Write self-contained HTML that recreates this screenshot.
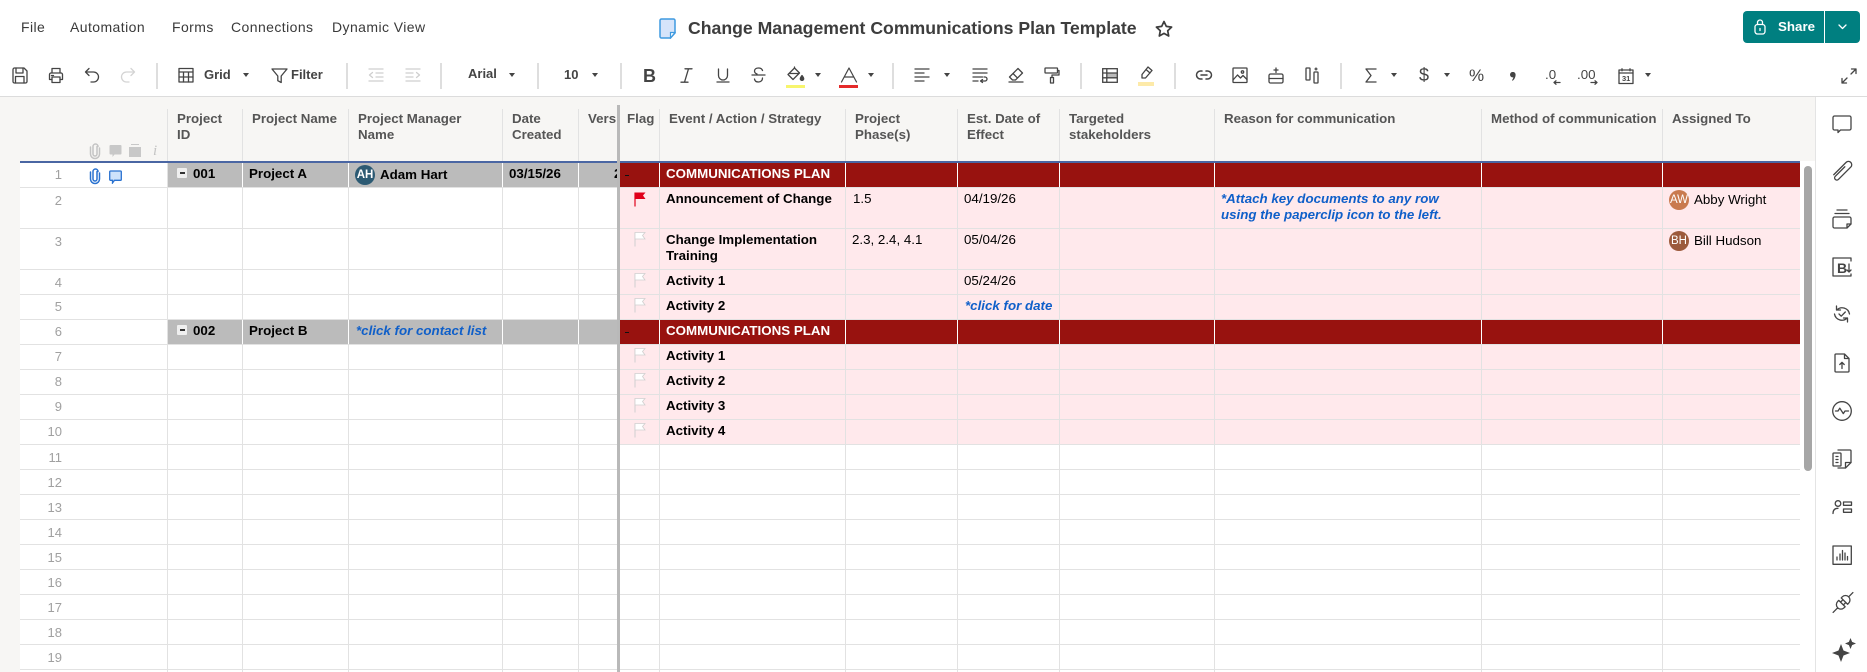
<!DOCTYPE html>
<html><head><meta charset="utf-8"><title>Change Management Communications Plan Template</title>
<style>
html,body{margin:0;padding:0;background:#fff}
body{position:relative;width:1867px;height:672px;overflow:hidden;font-family:"Liberation Sans",Arial,sans-serif;color:#000}
div,span,svg{position:absolute}
.t{white-space:nowrap;font-size:13.33px;line-height:16px;padding-top:1px}
.b{font-weight:bold}
.m{font-size:14px;color:#3a3a3a;letter-spacing:.42px;top:19px;line-height:16px;white-space:nowrap}
.h{font-size:13.3px;font-weight:bold;color:#555;line-height:16px;top:111px;white-space:nowrap}
.n{font-size:13px;color:#a0a0a0;line-height:16px;width:30px;left:32px;text-align:right}
.l{font-style:italic;font-weight:bold;color:#0f5fc9}
.tb{font-size:13px;font-weight:bold;color:#444;line-height:16px;top:67px;white-space:nowrap}
.sep{width:2px;height:26px;top:63px;background:#dedede}
.c{width:0;height:0;border-left:3.5px solid transparent;border-right:3.5px solid transparent;border-top:4.5px solid #444;top:73px}
.i{fill:none;stroke:#444;stroke-width:1.3;stroke-linecap:round;stroke-linejoin:round;overflow:visible}
.hl{left:20px;width:1780px;height:1px;background:#e2e2e2}
.vl{width:1px;background:#e2e2e2}
.av{border-radius:50%;width:20px;height:20px;color:#fff;font-size:11.5px;line-height:20px;text-align:center}
.mb{width:10px;height:10px;left:177px;background:#efefef;border-radius:1px}
.mb:after{content:"";position:absolute;left:2.5px;top:4px;width:5px;height:2px;background:#333}
.fl{width:12px;height:15px;left:634px;overflow:visible}
</style></head>
<body>
<!-- top bar -->
<div class="m" style="left:21px">File</div>
<div class="m" style="left:70px">Automation</div>
<div class="m" style="left:172px">Forms</div>
<div class="m" style="left:231px">Connections</div>
<div class="m" style="left:332px">Dynamic View</div>

<svg style="left:659px;top:18px" width="17" height="21" viewBox="0 0 17 21"><path d="M2.5 1h12a1.5 1.5 0 0 1 1.5 1.500V15l-4.500 5H2.500A1.500 1.500 0 0 1 1 18.500v-16A1.500 1.500 0 0 1 2.500 1z" fill="#d6e4fa" stroke="#3f9ae0" stroke-width="1.500"/><path d="M16 14.500h-4.500V20z" fill="#fff" stroke="#3f9ae0" stroke-width="1.200"/></svg>
<div class="t b" style="left:688px;top:16px;font-size:17.65px;line-height:22px;color:#3d3d3d">Change Management Communications Plan Template</div>
<svg class="i" style="left:1155px;top:20px;stroke-width:1.700;stroke:#3d3d3d" width="18" height="18" viewBox="0 0 18 18"><path d="M9 1.500l2.300 4.900 5.300.7-3.900 3.600 1 5.300L9 13.400l-4.700 2.600 1-5.300L1.400 7.100l5.300-.7z"/></svg>

<div style="left:1743px;top:11px;width:117px;height:32px;background:#007f80;border-radius:4px"></div>
<div style="left:1824px;top:11px;width:1px;height:32px;background:#fff"></div>
<svg class="i" style="left:1754px;top:19px;stroke:#fff;stroke-width:1.300" width="12" height="16" viewBox="0 0 12 16"><rect x="1" y="5.500" width="10" height="9.500" rx="2.500"/><path d="M3.500 5.500V3.500a2.500 2.500 0 0 1 5 0v2"/><path d="M6 9.500v2"/></svg>
<div class="t b" style="left:1778px;top:18px;color:#fff">Share</div>
<svg class="i" style="left:1838px;top:24px;stroke:#fff;stroke-width:1.300" width="9" height="6" viewBox="0 0 9 6"><path d="M1 1l3.500 3.500L8 1"/></svg>

<!-- toolbar -->
<svg class="i" style="left:12px;top:67px" width="16" height="17" viewBox="0 0 16 17"><path d="M1 2.500A1.500 1.500 0 0 1 2.500 1H12l3 3v10.500a1.500 1.500 0 0 1-1.500 1.500h-11A1.500 1.500 0 0 1 1 14.500z"/><path d="M4 1v5h7V1M3.500 16v-6.500h8.500V16"/></svg>
<svg class="i" style="left:48px;top:67px" width="16" height="17" viewBox="0 0 16 17"><path d="M4 6V1.500h8V6M4 12.500H1.500V7.500A1.500 1.500 0 0 1 3 6h10a1.500 1.500 0 0 1 1.500 1.500v5H12"/><rect x="4" y="10" width="8" height="5.500"/><path d="M3.500 8.500h2"/></svg>
<svg class="i" style="left:84px;top:67px" width="16" height="17" viewBox="0 0 16 17"><path d="M5 1.500L1.500 5 5 8.500M1.500 5h8a5 5 0 0 1 0 10H7"/></svg>
<svg class="i" style="left:120px;top:67px;stroke:#d4d4d4" width="16" height="17" viewBox="0 0 16 17"><path d="M11 1.500L14.500 5 11 8.500M14.500 5h-8a5 5 0 0 0 0 10H9"/></svg>
<div class="sep" style="left:156px"></div>

<svg class="i" style="left:178px;top:67px" width="16" height="16" viewBox="0 0 16 16"><rect x="1" y="1.500" width="14" height="13.500"/><path d="M1 5h14M1 10h14M5.500 5v10M10.500 5v10"/></svg>
<div class="tb" style="left:204px">Grid</div>
<div class="c" style="left:243px"></div>
<svg class="i" style="left:271px;top:68px" width="17" height="16" viewBox="0 0 17 16"><path d="M1 1h15l-5.800 7v6.500l-3.400-1.800V8z"/></svg>
<div class="tb" style="left:291px">Filter</div>
<div class="sep" style="left:346px"></div>
<svg class="i" style="left:368px;top:68px;stroke:#cfcfcf" width="16" height="14" viewBox="0 0 16 14"><path d="M1 1h14M8 5h7M8 9h7M1 13h14M4.500 4.500L1.500 7l3 2.500"/></svg>
<svg class="i" style="left:405px;top:68px;stroke:#cfcfcf" width="16" height="14" viewBox="0 0 16 14"><path d="M1 1h14M1 5h7M1 9h7M1 13h14M11.500 4.500l3 2.500-3 2.500"/></svg>
<div class="sep" style="left:440px"></div>
<div class="tb" style="left:468px;top:66px">Arial</div>
<div class="c" style="left:509px"></div>
<div class="sep" style="left:537px"></div>
<div class="tb" style="left:564px">10</div>
<div class="c" style="left:592px"></div>
<div class="sep" style="left:620px"></div>

<div class="t b" style="left:643px;top:65px;font-size:18px;line-height:20px;color:#444">B</div>
<svg class="i" style="left:680px;top:68px;stroke-width:1.300" width="13" height="15" viewBox="0 0 13 15"><path d="M5 .8h7M1 14.200h7M8.500 .8L4.500 14.200"/></svg>
<svg class="i" style="left:716px;top:68px" width="14" height="15" viewBox="0 0 14 15"><path d="M2.500 1v6.500a4.500 4.500 0 0 0 9 0V1M1 14h12"/></svg>
<svg class="i" style="left:751px;top:67px" width="15" height="16" viewBox="0 0 15 16"><path d="M11.500 3.500C11 2 9.500 1 7.500 1 5 1 3.500 2.300 3.500 4c0 1.500 1 2.500 2.500 3M1 8h13M11.500 11c0 2.500-1.800 4-4 4-2 0-3.700-1-4-3"/></svg>
<svg class="i" style="left:787px;top:67px" width="18" height="14" viewBox="0 0 18 14"><path d="M7.500 1L1 7.500l5 5 6.500-6.500zM7.500 1V0M2.500 6.500h9"/><path d="M15 8.500c-1 1.500-1.700 2.300-1.700 3.200a1.700 1.700 0 0 0 3.400 0c0-.9-.7-1.700-1.700-3.200z" fill="#444"/></svg>
<div style="left:786px;top:85px;width:19px;height:3px;background:#f7f56d"></div>
<div class="c" style="left:815px"></div>
<svg class="i" style="left:840px;top:67px;stroke-width:1.200" width="18" height="16" viewBox="0 0 18 16"><path d="M1.500 15L9 1l7.500 14M4.300 10h9.400"/></svg>
<div style="left:839px;top:85px;width:19px;height:3px;background:#e52b2b"></div>
<div class="c" style="left:868px"></div>
<div class="sep" style="left:892px"></div>

<svg class="i" style="left:914px;top:68px" width="16" height="14" viewBox="0 0 16 14"><path d="M1 1h14M1 5h9M1 9h14M1 13h9"/></svg>
<div class="c" style="left:944px"></div>
<svg class="i" style="left:972px;top:68px" width="16" height="15" viewBox="0 0 16 15"><path d="M1 1h14M1 5h14M1 9h9.500M1 13h5M8.500 13h4.500a2 2 0 0 0 0-4h-1M10.500 11.500L8.500 13l2 1.500"/></svg>
<svg class="i" style="left:1008px;top:67px" width="16" height="16" viewBox="0 0 16 16"><path d="M10 1.500l4.500 4.500-7 7H4.500L1.500 10zM5 6.500l4.500 4.500M1 15h14"/></svg>
<svg class="i" style="left:1044px;top:67px" width="16" height="17" viewBox="0 0 16 17"><rect x="1" y="1" width="12.500" height="5" rx=".5"/><path d="M13.500 3.500H15v4.500H8v2.500"/><rect x="6.500" y="10.500" width="3" height="5.500"/></svg>
<div class="sep" style="left:1080px"></div>
<svg style="left:1102px;top:68px" width="16" height="15" viewBox="0 0 16 15"><rect x="4.800" y="5" width="10.500" height="4.800" fill="#bbb"/><rect x=".7" y=".7" width="14.600" height="13.600" fill="none" stroke="#444" stroke-width="1.300"/><path d="M.7 5h14.600M.7 9.800h14.600M4.800.7v13.600" fill="none" stroke="#444" stroke-width="1.300"/></svg>
<svg class="i" style="left:1139px;top:66px" width="14" height="15" viewBox="0 0 14 15"><path d="M9 1l4 3.500-6.500 7.500H3V8.500zM7 3.500l4 3.500"/></svg>
<div style="left:1138px;top:82px;width:16px;height:4px;background:#fdeaa9"></div>
<div class="sep" style="left:1174px"></div>
<svg class="i" style="left:1196px;top:69px;stroke-width:1.500" width="16" height="12" viewBox="0 0 16 12"><path d="M6 2H4.500a4 4 0 0 0 0 8H6M10 2h1.500a4 4 0 0 1 0 8H10M5 6h6"/></svg>
<svg class="i" style="left:1232px;top:67px" width="16" height="16" viewBox="0 0 16 16"><rect x="1" y="1" width="14" height="14.500" rx=".5"/><path d="M1 13l4.500-5 3 3 2.500-2.500 4 4"/><circle cx="10.500" cy="5" r="1.200"/></svg>
<svg class="i" style="left:1268px;top:67px" width="16" height="17" viewBox="0 0 16 17"><rect x="1" y="7" width="14" height="9" rx="1.500"/><path d="M1 11.500h14M8 1v4.500M6 3h4"/></svg>
<svg class="i" style="left:1305px;top:67px" width="14" height="17" viewBox="0 0 14 17"><rect x="1" y="1" width="4" height="12" rx=".5"/><rect x="9" y="5" width="4" height="11" rx=".5"/><path d="M11 1v2M10 2h2"/></svg>
<div class="sep" style="left:1340px"></div>
<svg class="i" style="left:1365px;top:68px" width="12" height="15" viewBox="0 0 12 15"><path d="M11 1H1l5 6.500L1 14h10"/></svg>
<div class="c" style="left:1391px"></div>
<div class="t" style="left:1419px;top:64px;font-size:18px;line-height:20px;color:#444">$</div>
<div class="c" style="left:1444px"></div>
<div class="t" style="left:1469px;top:65px;font-size:17px;line-height:20px;color:#444">%</div>
<svg style="left:1510px;top:72px" width="6" height="9" viewBox="0 0 6 9"><path d="M0 2.600a2.800 2.800 0 1 1 5.600.2c0 2.500-1.300 4.700-2.900 6l-.7-.6c.8-1 1.200-1.900 1.300-2.900A2.700 2.700 0 0 1 0 2.600z" fill="#444"/></svg>
<div class="t" style="left:1545px;top:66px;font-size:13.33px;color:#444">.0</div>
<svg class="i" style="left:1553px;top:80px" width="8" height="5" viewBox="0 0 8 5"><path d="M7 2.500H1M3 .8L1 2.500 3 4.200"/></svg>
<div class="t" style="left:1577px;top:66px;font-size:13.33px;color:#444">.00</div>
<svg class="i" style="left:1590px;top:80px" width="8" height="5" viewBox="0 0 8 5"><path d="M1 2.500h6M5 .8l2 1.700-2 1.700"/></svg>
<svg class="i" style="left:1618px;top:68px" width="16" height="16" viewBox="0 0 16 16"><rect x="1" y="2" width="14" height="13.500"/><path d="M1 5h14M4 .8v2M12 .8v2"/></svg>
<div class="t b" style="left:1622px;top:73px;font-size:7.500px;line-height:9px;color:#444">31</div>
<div class="c" style="left:1645px"></div>
<svg class="i" style="left:1841px;top:68px" width="16" height="16" viewBox="0 0 16 16"><path d="M10 6l5-5M10.500 1H15v4.500M6 10l-5 5M1 10.500V15h4.500"/></svg>

<div style="left:0;top:96px;width:1867px;height:1px;background:#dcdcdc"></div>

<!-- table base -->
<div style="left:0;top:97px;width:20px;height:575px;background:#f7f6f4"></div>
<div style="left:20px;top:97px;width:1795px;height:64px;background:#f7f6f4"></div>
<div style="left:1815px;top:97px;width:1px;height:575px;background:#e4e4e4"></div>

<!-- coloured rows -->
<div style="left:619px;top:188px;width:1181px;height:132px;background:#ffe9ec"></div>
<div style="left:619px;top:345px;width:1181px;height:100px;background:#ffe9ec"></div>

<!-- horizontal lines -->
<div class="hl" style="top:187px"></div><div class="hl" style="top:228px"></div><div class="hl" style="top:269px"></div><div class="hl" style="top:294px"></div><div class="hl" style="top:319px"></div><div class="hl" style="top:344px"></div><div class="hl" style="top:369px"></div><div class="hl" style="top:394px"></div><div class="hl" style="top:419px"></div><div class="hl" style="top:444px"></div><div class="hl" style="top:469px"></div><div class="hl" style="top:494px"></div><div class="hl" style="top:519px"></div><div class="hl" style="top:544px"></div><div class="hl" style="top:569px"></div><div class="hl" style="top:594px"></div><div class="hl" style="top:619px"></div><div class="hl" style="top:644px"></div><div class="hl" style="top:669px"></div>

<!-- vertical lines -->
<div class="vl" style="left:167px;top:109px;height:563px"></div>
<div class="vl" style="left:242px;top:109px;height:563px"></div>
<div class="vl" style="left:348px;top:109px;height:563px"></div>
<div class="vl" style="left:502px;top:109px;height:563px"></div>
<div class="vl" style="left:578px;top:109px;height:563px"></div>
<div class="vl" style="left:659px;top:109px;height:563px"></div>
<div class="vl" style="left:845px;top:109px;height:563px"></div>
<div class="vl" style="left:957px;top:109px;height:563px"></div>
<div class="vl" style="left:1059px;top:109px;height:563px"></div>
<div class="vl" style="left:1214px;top:109px;height:563px"></div>
<div class="vl" style="left:1481px;top:109px;height:563px"></div>
<div class="vl" style="left:1662px;top:109px;height:563px"></div>

<!-- section rows -->
<div style="left:168px;top:163px;width:449px;height:24px;background:#bbb"></div>
<div style="left:168px;top:320px;width:449px;height:24px;background:#bbb"></div>
<div style="left:619px;top:163px;width:1181px;height:24px;background:#98120f"></div>
<div style="left:619px;top:320px;width:1181px;height:24px;background:#98120f"></div>
<div class="vl" style="left:242px;top:163px;height:24px;background:#fff"></div><div class="vl" style="left:348px;top:163px;height:24px;background:#fff"></div><div class="vl" style="left:502px;top:163px;height:24px;background:#fff"></div><div class="vl" style="left:578px;top:163px;height:24px;background:#fff"></div>
<div class="vl" style="left:242px;top:320px;height:24px;background:#fff"></div><div class="vl" style="left:348px;top:320px;height:24px;background:#fff"></div><div class="vl" style="left:502px;top:320px;height:24px;background:#fff"></div><div class="vl" style="left:578px;top:320px;height:24px;background:#fff"></div>
<div class="vl" style="left:659px;top:163px;height:24px;background:#fff"></div><div class="vl" style="left:845px;top:163px;height:24px;background:#fff"></div><div class="vl" style="left:957px;top:163px;height:24px;background:#fff"></div><div class="vl" style="left:1059px;top:163px;height:24px;background:#fff"></div><div class="vl" style="left:1214px;top:163px;height:24px;background:#fff"></div><div class="vl" style="left:1481px;top:163px;height:24px;background:#fff"></div><div class="vl" style="left:1662px;top:163px;height:24px;background:#fff"></div>
<div class="vl" style="left:659px;top:320px;height:24px;background:#fff"></div><div class="vl" style="left:845px;top:320px;height:24px;background:#fff"></div><div class="vl" style="left:957px;top:320px;height:24px;background:#fff"></div><div class="vl" style="left:1059px;top:320px;height:24px;background:#fff"></div><div class="vl" style="left:1214px;top:320px;height:24px;background:#fff"></div><div class="vl" style="left:1481px;top:320px;height:24px;background:#fff"></div><div class="vl" style="left:1662px;top:320px;height:24px;background:#fff"></div>

<div style="left:20px;top:161px;width:1780px;height:2px;background:#4a66a3"></div>

<!-- header text -->
<div class="h" style="left:177px">Project<br>ID</div>
<div class="h" style="left:252px">Project Name</div>
<div class="h" style="left:358px">Project Manager<br>Name</div>
<div class="h" style="left:512px">Date<br>Created</div>
<div class="h" style="left:588px;width:28.5px;overflow:hidden">Version</div>
<div class="h" style="left:627px">Flag</div>
<div class="h" style="left:669px">Event / Action / Strategy</div>
<div class="h" style="left:855px">Project<br>Phase(s)</div>
<div class="h" style="left:967px">Est. Date of<br>Effect</div>
<div class="h" style="left:1069px">Targeted<br>stakeholders</div>
<div class="h" style="left:1224px">Reason for communication</div>
<div class="h" style="left:1491px">Method of communication</div>
<div class="h" style="left:1672px">Assigned To</div>

<!-- gutter header icons -->
<svg class="i" style="left:89px;top:143px;stroke:#c4c4c4;stroke-width:1.500" width="12" height="15" viewBox="0 0 12 15"><path d="M8 3.500v7.500a2 2 0 0 1-4 0V3.500a2.500 2.500 0 0 1 5 0"/><path d="M10.500 5v6a4.500 4.500 0 0 1-9 0V4"/></svg>
<svg style="left:109px;top:144px" width="13" height="14" viewBox="0 0 13 14"><path d="M1.500 1h10a1 1 0 0 1 1 1v7.500a1 1 0 0 1-1 1H5.500L3.500 13v-2.500h-2a1 1 0 0 1-1-1V2a1 1 0 0 1 1-1z" fill="#c8c8c8"/></svg>
<svg style="left:129px;top:144px" width="12" height="13" viewBox="0 0 12 13"><path d="M2 0h8v1H2zM0 3h12v10H0z" fill="#c8c8c8"/></svg>
<div class="t" style="left:153px;top:142px;font-family:'Liberation Serif',serif;font-style:italic;font-size:15px;color:#c4c4c4">i</div>

<!-- row numbers -->
<div class="n" style="top:167px">1</div><div class="n" style="top:193px">2</div><div class="n" style="top:234px">3</div><div class="n" style="top:275px">4</div><div class="n" style="top:299px">5</div><div class="n" style="top:324px">6</div><div class="n" style="top:349px">7</div><div class="n" style="top:374px">8</div><div class="n" style="top:399px">9</div><div class="n" style="top:424px">10</div><div class="n" style="top:450px">11</div><div class="n" style="top:475px">12</div><div class="n" style="top:500px">13</div><div class="n" style="top:525px">14</div><div class="n" style="top:550px">15</div><div class="n" style="top:575px">16</div><div class="n" style="top:600px">17</div><div class="n" style="top:625px">18</div><div class="n" style="top:650px">19</div>

<!-- row 1 icons -->
<svg class="i" style="left:89px;top:168px;stroke:#2a72d0;stroke-width:1.500" width="12" height="15" viewBox="0 0 12 15"><path d="M8 3.500v7.500a2 2 0 0 1-4 0V3.500a2.500 2.500 0 0 1 5 0"/><path d="M10.500 5v6a4.500 4.500 0 0 1-9 0V4"/></svg>
<svg style="left:109px;top:170px" width="13" height="14" viewBox="0 0 13 14"><path d="M1.500 1h10a.8.800 0 0 1 .8.800v7.700a.8.800 0 0 1-.8.800H5.500L3.500 13v-2.700h-2a.8.800 0 0 1-.8-.8V1.800A.8.800 0 0 1 1.500 1z" fill="#cfe2fb" stroke="#2a72d0" stroke-width="1.300"/></svg>

<!-- grid content left -->
<div class="mb" style="top:168px"></div>
<div class="t b" style="left:193px;top:165px">001</div>
<div class="t b" style="left:249px;top:165px">Project A</div>
<div class="av b" style="left:355px;top:165px;background:#2c5a73">AH</div>
<div class="t b" style="left:380px;top:166px">Adam Hart</div>
<div class="t b" style="left:509px;top:165px">03/15/26</div>
<div class="t b" style="left:614px;top:165px;width:3px;overflow:hidden">2</div>

<div class="mb" style="top:325px"></div>
<div class="t b" style="left:193px;top:322px">002</div>
<div class="t b" style="left:249px;top:322px">Project B</div>
<div class="t l" style="left:356px;top:322px">*click for contact list</div>

<div style="left:617px;top:105px;width:2.500px;height:567px;background:#b9b9b9"></div>

<!-- grid content right -->
<div style="left:625px;top:175px;width:4px;height:1px;background:#111"></div>
<div class="t b" style="left:666px;top:165px;color:#fff">COMMUNICATIONS PLAN</div>
<div style="left:625px;top:332px;width:4px;height:1px;background:#111"></div>
<div class="t b" style="left:666px;top:322px;color:#fff">COMMUNICATIONS PLAN</div>

<svg class="fl" style="top:192px" viewBox="0 0 12 15"><path d="M1 .5v14" stroke="#e0001b" stroke-width="1.200"/><path d="M1 .5h10.500L9 3.500l2.500 3.500H1z" fill="#e0001b"/></svg>
<svg class="fl" style="top:232px" viewBox="0 0 12 15"><path d="M1 .5v14" stroke="#cfcfcf" stroke-width="1"/><path d="M1 .5h10L8.500 3.500 11 7H1z" fill="#fff" stroke="#cfcfcf" stroke-width=".8"/></svg>
<svg class="fl" style="top:273px" viewBox="0 0 12 15"><path d="M1 .5v14" stroke="#cfcfcf" stroke-width="1"/><path d="M1 .5h10L8.500 3.500 11 7H1z" fill="#fff" stroke="#cfcfcf" stroke-width=".8"/></svg>
<svg class="fl" style="top:298px" viewBox="0 0 12 15"><path d="M1 .5v14" stroke="#cfcfcf" stroke-width="1"/><path d="M1 .5h10L8.500 3.500 11 7H1z" fill="#fff" stroke="#cfcfcf" stroke-width=".8"/></svg>
<svg class="fl" style="top:348px" viewBox="0 0 12 15"><path d="M1 .5v14" stroke="#cfcfcf" stroke-width="1"/><path d="M1 .5h10L8.500 3.500 11 7H1z" fill="#fff" stroke="#cfcfcf" stroke-width=".8"/></svg>
<svg class="fl" style="top:373px" viewBox="0 0 12 15"><path d="M1 .5v14" stroke="#cfcfcf" stroke-width="1"/><path d="M1 .5h10L8.500 3.500 11 7H1z" fill="#fff" stroke="#cfcfcf" stroke-width=".8"/></svg>
<svg class="fl" style="top:398px" viewBox="0 0 12 15"><path d="M1 .5v14" stroke="#cfcfcf" stroke-width="1"/><path d="M1 .5h10L8.500 3.500 11 7H1z" fill="#fff" stroke="#cfcfcf" stroke-width=".8"/></svg>
<svg class="fl" style="top:423px" viewBox="0 0 12 15"><path d="M1 .5v14" stroke="#cfcfcf" stroke-width="1"/><path d="M1 .5h10L8.500 3.500 11 7H1z" fill="#fff" stroke="#cfcfcf" stroke-width=".8"/></svg>

<div class="t b" style="left:666px;top:190px">Announcement of Change</div>
<div class="t" style="left:853px;top:190px">1.5</div>
<div class="t" style="left:964px;top:190px">04/19/26</div>
<div class="t l" style="left:1221px;top:190px">*Attach key documents to any row<br>using the paperclip icon to the left.</div>
<div class="av" style="left:1669px;top:190px;background:#c97a4f">AW</div>
<div class="t" style="left:1694px;top:191px">Abby Wright</div>

<div class="t b" style="left:666px;top:231px">Change Implementation<br>Training</div>
<div class="t" style="left:852px;top:231px">2.3, 2.4, 4.1</div>
<div class="t" style="left:964px;top:231px">05/04/26</div>
<div class="av" style="left:1669px;top:231px;background:#9c5a3c">BH</div>
<div class="t" style="left:1694px;top:232px">Bill Hudson</div>

<div class="t b" style="left:666px;top:272px">Activity 1</div>
<div class="t" style="left:964px;top:272px">05/24/26</div>
<div class="t b" style="left:666px;top:297px">Activity 2</div>
<div class="t l" style="left:965px;top:297px">*click for date</div>
<div class="t b" style="left:666px;top:347px">Activity 1</div>
<div class="t b" style="left:666px;top:372px">Activity 2</div>
<div class="t b" style="left:666px;top:397px">Activity 3</div>
<div class="t b" style="left:666px;top:422px">Activity 4</div>

<!-- right white gutter + scrollbar -->
<div style="left:1800px;top:163px;width:15px;height:509px;background:#fff"></div>
<div style="left:1804px;top:166px;width:8px;height:305px;background:#a6a6a6;border-radius:4px"></div>

<!-- sidebar icons -->
<svg class="i" style="left:1832px;top:114px" width="20" height="20" viewBox="0 0 20 20"><path d="M2.500 2h15A1.500 1.500 0 0 1 19 3.500v11a1.500 1.500 0 0 1-1.500 1.500H8.500L6 18.500V16H2.500A1.500 1.500 0 0 1 1 14.500v-11A1.500 1.500 0 0 1 2.500 2z"/></svg>
<svg class="i" style="left:1832px;top:161px" width="20" height="20" viewBox="0 0 20 20"><g transform="rotate(45 10 10)"><path d="M9 5v13.500a2.200 2.200 0 0 0 4.400 0V1a3.300 3.300 0 0 0-6.600 0v17.500"/></g></svg>
<svg class="i" style="left:1832px;top:209px" width="20" height="20" viewBox="0 0 20 20"><path d="M5 1h10M3 4.500h14"/><path d="M1 9.500A1.500 1.500 0 0 1 2.500 8h15A1.500 1.500 0 0 1 19 9.500V15l-4 4H2.500A1.500 1.500 0 0 1 1 17.500z"/><path d="M19 15h-4v4"/></svg>
<svg class="i" style="left:1832px;top:257px" width="20" height="20" viewBox="0 0 20 20"><path d="M19 4V1H1v18h18v-2"/><path d="M17 7v8M15 13l2 2 2-2"/></svg>
<div class="t b" style="left:1837px;top:259px;font-size:14px;color:#444">B</div>
<svg class="i" style="left:1833px;top:305px" width="18" height="18" viewBox="0 0 18 18"><path d="M3.500 1v4h4M3.800 5A7.500 7.500 0 0 1 16.500 9M14.500 17v-4h-4M14.200 13A7.500 7.500 0 0 1 1.500 9"/><path d="M6 9l2.200 2.200L12.300 7"/></svg>
<svg class="i" style="left:1834px;top:353px" width="16" height="20" viewBox="0 0 16 20"><path d="M1 2a1 1 0 0 1 1-1h8.500L15 5.500V18a1 1 0 0 1-1 1H2a1 1 0 0 1-1-1zM10.500 1v4.500H15"/><path d="M8 15.500v-6M5.800 11.500L8 9.300l2.200 2.200"/></svg>
<svg class="i" style="left:1832px;top:401px" width="20" height="20" viewBox="0 0 20 20"><circle cx="10" cy="10" r="9.300"/><path d="M3.500 10H6l1.800-2.800 3.500 5.400L13 10h3.500"/></svg>
<svg class="i" style="left:1832px;top:449px" width="20" height="20" viewBox="0 0 20 20"><path d="M6 1h12a1 1 0 0 1 1 1v11.500L13.500 19H6"/><path d="M19 13.500h-5.500V19"/><rect x="1" y="4" width="8" height="13" rx=".8"/><path d="M4 7.500h2M4 10.500h2M4 13.500h2"/></svg>
<svg class="i" style="left:1832px;top:500px" width="20" height="14" viewBox="0 0 20 14"><circle cx="6" cy="3.500" r="2.800"/><path d="M1 13.500C1 10 3 8.300 6 8.300"/><rect x="11.500" y="2" width="8" height="3.300"/><rect x="11.500" y="9" width="8" height="3.300"/></svg>
<svg class="i" style="left:1832px;top:545px" width="20" height="20" viewBox="0 0 20 20"><rect x="1" y="1" width="18.300" height="18.300"/><path d="M5 15v-3M8 15V9M10.500 15V5.500M13 15V8M15.500 15v-3.500"/></svg>
<svg class="i" style="left:1832px;top:592px" width="22" height="21" viewBox="0 0 22 21"><g transform="rotate(-45 11 10.500)"><path d="M9.500 6H8a4.500 4.500 0 0 0 0 9h1.500zM13 6h1.500a4.500 4.500 0 0 1 0 9H13zM-3 10.500H3.500M19 10.500h6M9.500 8.500H13M9.500 12.500H13"/></g></svg>
<svg style="left:1832px;top:638px" width="24" height="24" viewBox="0 0 24 24"><path d="M9 6l2.500 6.500L18 15l-6.500 2.500L9 24l-2.500-6.500L0 15l6.500-2.500z" fill="#444"/><path d="M18.500 0l1.600 3.900L24 5.500l-3.900 1.600L18.500 11l-1.600-3.900L13 5.500l3.900-1.600z" fill="#444"/></svg>
</body></html>
